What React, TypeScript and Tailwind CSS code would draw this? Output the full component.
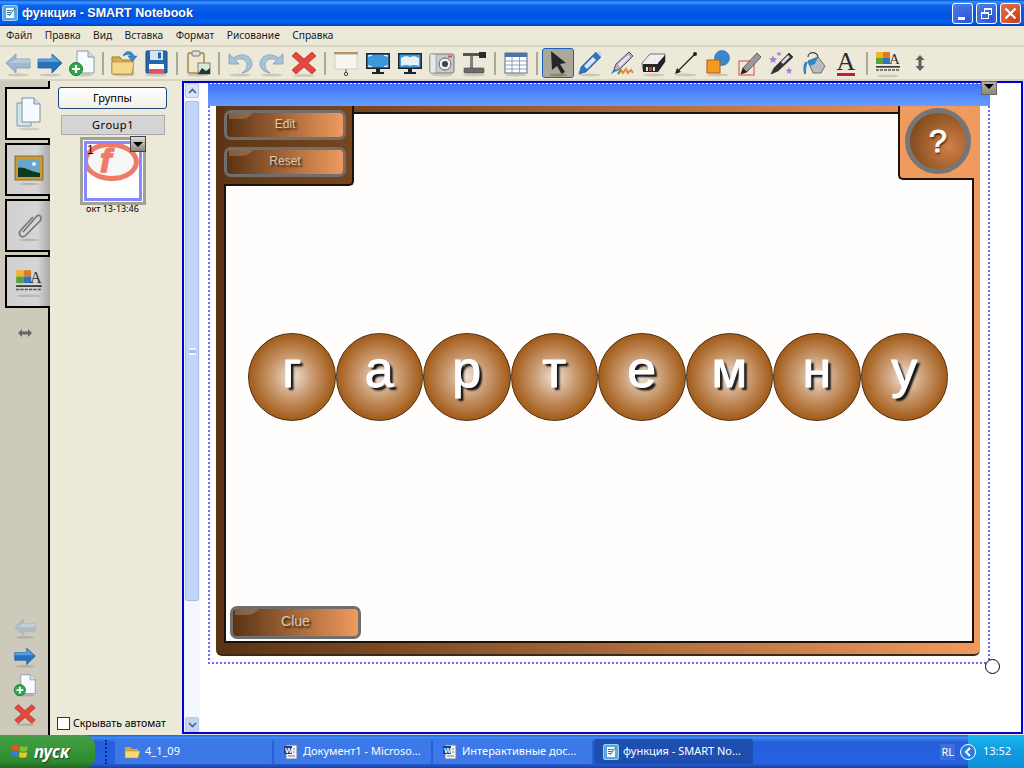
import type { ReactNode } from 'react';

const Shadow = ({ cx = 14, cy = 26, rx = 11 }: { cx?: number; cy?: number; rx?: number }) => (
  <ellipse cx={cx} cy={cy} rx={rx} ry={1.4} fill="#000" opacity={0.14} />
);

const Ico = ({ children, size = 28 }: { children: ReactNode; size?: number }) => (
  <svg width={size} height={size} viewBox="0 0 28 28">
    {children}
  </svg>
);

const ArrowL = ({ fill = '#9db9d2', stroke = '#7d9ab5', size = 28 }: { fill?: string; stroke?: string; size?: number }) => (
  <Ico size={size}>
    <Shadow />
    <path d="M2 14 L12 5 V10 H26 V19 H12 V24 Z" fill={fill} stroke={stroke} strokeWidth="0.8" />
    <path d="M12 10 H26 V14 H5 Z" fill="#fff" opacity="0.25" />
  </Ico>
);

const ArrowR = ({ size = 28 }: { size?: number }) => (
  <Ico size={size}>
    <Shadow />
    <path d="M26 14 L16 5 V10 H2 V19 H16 V24 Z" fill="#2672bd" stroke="#1c5a9c" strokeWidth="0.8" />
    <path d="M2 10 H16 V6 L24 13 H2 Z" fill="#6fb0e8" opacity="0.7" />
  </Ico>
);

const AddPage = ({ size = 28 }: { size?: number }) => (
  <Ico size={size}>
    <Shadow />
    <path d="M9 2 H20 L26 8 V24 H9 Z" fill="#f7fbff" stroke="#8a98a8" />
    <path d="M20 2 V8 H26" fill="#d4e0ec" stroke="#8a98a8" />
    <circle cx="8" cy="20" r="6.5" fill="#2ea84a" stroke="#1c7a34" />
    <path d="M8 16 V24 M4 20 H12" stroke="#fff" strokeWidth="2.2" />
  </Ico>
);

const Folder = () => (
  <Ico>
    <Shadow />
    <path d="M2 8 H10 L12 11 H23 V25 H2 Z" fill="#d7ad4e" stroke="#a07c2a" />
    <path d="M2 13 H24 L22 25 H2 Z" fill="#f4d88b" stroke="#b58f3a" strokeWidth="0.7" />
    <path d="M13 7 C15 1 22 1 24 7 L27 7 L22.5 12.5 L18 7 L21 7 C20 5 17 5 13 7 Z" fill="#3a86c8" stroke="#1f5f9e" strokeWidth="0.5" />
  </Ico>
);

const Save = () => (
  <Ico>
    <Shadow />
    <rect x="4" y="2" width="21" height="22" rx="1" fill="#2367b0" stroke="#174a84" />
    <rect x="8" y="2" width="13" height="9" fill="#d8e4f0" />
    <rect x="16" y="3.5" width="3" height="6" fill="#2367b0" />
    <rect x="7" y="15" width="15" height="9" fill="#fff" />
    <rect x="7" y="20" width="15" height="4" fill="#e25560" />
  </Ico>
);

const Clipboard = () => (
  <Ico>
    <Shadow />
    <rect x="4" y="4" width="16" height="20" rx="1" fill="#f2e6cc" stroke="#a8864e" strokeWidth="1.5" />
    <rect x="8" y="2" width="8" height="5" rx="1" fill="#ddd" stroke="#777" />
    <rect x="14" y="14" width="12" height="11" fill="#d9e6d8" stroke="#556" strokeWidth="0.7" />
    <path d="M14 25 L18 19 L22 22 L26 19 V25 Z" fill="#1f3a2a" />
  </Ico>
);

const Undo = ({ flip = false }: { flip?: boolean }) => (
  <Ico>
    <Shadow />
    <g transform={flip ? 'matrix(-1 0 0 1 28 0)' : undefined}>
      <path d="M3 5 V15 H13 L9.5 11.5 C14 8 21 10 21 16 C21 19.5 19 22 16 24 C22 23 26 19.5 26 15 C26 6 15 3 7.5 9 Z" fill="#a8c2dc" stroke="#7e9cb8" strokeWidth="0.8" />
    </g>
  </Ico>
);

const RedX = ({ size = 28 }: { size?: number }) => (
  <Ico size={size}>
    <Shadow cy={26.4} />
    <path d="M6 3 L14 10 L22 3 L26 7 L18 14 L26 21 L22 25 L14 18 L6 25 L2 21 L10 14 L2 7 Z" fill="#e4473e" stroke="#b8322c" strokeWidth="0.8" />
  </Ico>
);

const Projector = () => (
  <Ico>
    <rect x="2" y="3" width="24" height="2.4" fill="#b8985a" />
    <path d="M3 5.4 H25 V20 H3 Z" fill="#f7f6ee" stroke="#bbb" strokeWidth="0.6" />
    <path d="M14 20 V23" stroke="#555" />
    <circle cx="14" cy="25" r="1.6" fill="#fff" stroke="#333" />
  </Ico>
);

const Monitor = ({ book = false }: { book?: boolean }) => (
  <Ico>
    <rect x="2" y="4" width="24" height="16" fill="#1b2530" />
    <rect x="3.5" y="5.5" width="21" height="13" fill="#3d97d9" />
    {book ? (
      <path d="M5 9 C9 6.5 12 7 14 8.5 C16 7 19 6.5 23 9 V17 C19 15.5 16 15.5 14 17 C12 15.5 9 15.5 5 17 Z" fill="#e8f0f6" />
    ) : (
      <path d="M5 8 V6.5 H8 M20 6.5 H23 V8 M5 16 V17.5 H8 M20 17.5 H23 V16" stroke="#eaf6ff" fill="none" strokeWidth="1.2" />
    )}
    <rect x="12" y="20" width="4" height="3" fill="#222" />
    <rect x="8" y="23" width="12" height="2" fill="#222" />
  </Ico>
);

const Camera = () => (
  <Ico>
    <Shadow />
    <rect x="2" y="5" width="24" height="19" rx="2" fill="#c9c9c9" stroke="#777" />
    <rect x="2" y="5" width="6" height="19" fill="#e8e8e8" stroke="#888" strokeWidth="0.6" />
    <circle cx="17" cy="15" r="6" fill="#eee" stroke="#666" />
    <circle cx="17" cy="15" r="3" fill="#39424c" />
    <rect x="20" y="6.5" width="4" height="2" fill="#e05050" />
  </Ico>
);

const DocCam = () => (
  <Ico>
    <Shadow />
    <rect x="3" y="4" width="18" height="3" fill="#555" />
    <rect x="19" y="3" width="7" height="6" fill="#2b2b2b" />
    <rect x="10" y="7" width="3" height="13" fill="#808080" />
    <rect x="4" y="19" width="20" height="5" rx="1" fill="#6b6b6b" stroke="#3f3f3f" strokeWidth="0.6" />
  </Ico>
);

const TableIco = () => (
  <Ico>
    <Shadow />
    <rect x="3" y="4" width="22" height="20" fill="#fff" stroke="#536a88" />
    <rect x="3" y="4" width="22" height="4" fill="#4a76a8" />
    <path d="M3 12 H25 M3 16 H25 M3 20 H25 M10 8 V24 M17.5 8 V24" stroke="#7a8ea8" strokeWidth="0.8" />
  </Ico>
);

const Cursor = () => (
  <Ico>
    <ellipse cx="14" cy="26" rx="9" ry="1.4" fill="#000" opacity={0.2} />
    <path d="M7 2 L22 14 L16 15 L21 23 L17.5 25 L13 17 L8 21 Z" fill="#25262b" />
  </Ico>
);

const Pen = () => (
  <Ico>
    <Shadow />
    <path d="M3 25 L5 18 L20 3 L25 8 L10 23 Z" fill="#2f74bd" stroke="#1d528d" strokeWidth="0.6" />
    <path d="M8 17 L17 8 L20 11 L11 20 Z" fill="#d6e7f7" />
    <path d="M20 3 L25 8 L26 5 L23 2 Z" fill="#c8d8ea" />
  </Ico>
);

const Highlighter = () => (
  <Ico>
    <path d="M6 20 L8 15 L21 3 L25 7 L12 20 L8 22 Z" fill="#b9a7d0" stroke="#333" strokeWidth="0.8" />
    <path d="M10 15 L20 6 L22 8 L12 18 Z" fill="#e2e6e8" />
    <path d="M3 25 L6 20 L8 22 Z" fill="#1b6fbf" />
    <path d="M10 25 L13 21 L15 24 L18 20 L20 24 L23 21 L25 24" fill="none" stroke="#e8893a" strokeWidth="2" />
    <path d="M10 25 L13 21" stroke="#46a04c" strokeWidth="2" />
  </Ico>
);

const Eraser = () => (
  <Ico>
    <Shadow />
    <path d="M2 14 L10 5 H25 V12 L18 21 H3 Z" fill="#ededed" stroke="#555" strokeWidth="0.8" />
    <path d="M18 14 L25 6 V13 L18 23 Z" fill="#222" />
    <rect x="3" y="15" width="15" height="8" fill="#262626" />
    <rect x="6" y="18" width="2" height="4" fill="#ddd" />
    <rect x="9" y="18" width="3" height="4" fill="#c33" />
    <rect x="13" y="18" width="2" height="4" fill="#ddd" />
  </Ico>
);

const LineIco = () => (
  <Ico>
    <Shadow />
    <path d="M5 23 L23 5" stroke="#222" strokeWidth="1.3" />
    <path d="M3 25 L9 23 L5 19 Z" fill="#222" />
    <circle cx="23" cy="5" r="2" fill="#222" />
  </Ico>
);

const Shapes = () => (
  <Ico>
    <Shadow />
    <circle cx="18" cy="9" r="7.5" fill="#3a86d0" stroke="#2a68a8" strokeWidth="0.6" />
    <rect x="3" y="11" width="13" height="13" fill="#f39a24" stroke="#b05d10" />
  </Ico>
);

const PenBox = () => (
  <Ico>
    <rect x="3" y="12" width="15" height="14" fill="none" stroke="#d34b4b" strokeWidth="1" />
    <path d="M5 25 L7 19 L21 4 L25 8 L11 23 Z" fill="#9a9a9a" stroke="#333" strokeWidth="0.7" />
    <path d="M5 25 L7 19 L11 23 Z" fill="#222" />
  </Ico>
);

const MagicPen = () => (
  <Ico>
    <path d="M3 25 L6 19 L21 4 L25 8 L10 22 Z" fill="#333" stroke="#222" strokeWidth="0.6" />
    <path d="M13 13 L20 6 L22 8 L15 15 Z" fill="#ddd" />
    <path d="M5 6 L6.2 9 L9 9.4 L7 11.3 L7.6 14 L5 12.6 L2.6 14 L3 11.3 L1 9.4 L4 9 Z" fill="#a77fdb" />
    <path d="M11 2 L11.7 4 L13.6 4.2 L12.2 5.4 L12.7 7 L11 6.1 L9.4 7 L9.8 5.4 L8.4 4.2 L10.3 4 Z" fill="#a77fdb" />
    <path d="M21 18 L22 20.6 L24.6 20.8 L22.6 22.4 L23.3 25 L21 23.6 L18.8 25 L19.4 22.4 L17.5 20.8 L20 20.6 Z" fill="#a77fdb" />
  </Ico>
);

const Fill = () => (
  <Ico>
    <path d="M8 8 C8 2 18 2 18 9" fill="none" stroke="#444" strokeWidth="1.2" />
    <path d="M8 12 L18 8 L25 17 L21 24 H13 Z" fill="#b8bcc0" stroke="#555" strokeWidth="0.8" />
    <path d="M8 12 L18 8 L15 15 L9 17 Z" fill="#2c86cc" />
    <path d="M5 13 C3 16 3 21 4 25 L6 25 C6 21 6 16 8 13 Z" fill="#2c86cc" />
  </Ico>
);

const LetterA = () => (
  <span className="flex flex-col items-center leading-none">
    <span className="font-['Liberation_Serif',serif] text-[26px] leading-[21px] text-[#2a2a2a]">A</span>
    <span className="mt-[1px] h-[3px] w-[18px] bg-[#c4202c]" />
  </span>
);

const Props = ({ size = 28 }: { size?: number }) => (
  <Ico size={size}>
    <Shadow cy={27} />
    <rect x="2" y="3" width="7" height="6" fill="#eeb62a" />
    <rect x="9" y="3" width="7" height="6" fill="#e0782a" />
    <rect x="2" y="9" width="7" height="6" fill="#5aa03c" />
    <rect x="9" y="9" width="7" height="6" fill="#2f74c4" />
    <text x="15" y="15" fontFamily="Liberation Serif, serif" fontSize="15" fill="#333">A</text>
    <rect x="2" y="17" width="24" height="1.6" fill="#333" />
    <path d="M2 21 H26" stroke="#555" strokeWidth="1.5" strokeDasharray="3 1" />
  </Ico>
);

const Sep = () => (
  <div className="flex h-full w-[10px] items-center justify-center">
    <div className="h-[23px] w-[2px] bg-[#aca899]" />
  </div>
);

const Slot = ({ children, active = false }: { children: ReactNode; active?: boolean }) => (
  <div className={active
    ? 'flex h-[30px] w-8 items-center justify-center rounded-[3px] border border-[#1a5fc0] bg-[#aca899]'
    : 'flex h-[30px] w-8 items-center justify-center'}>
    {children}
  </div>
);

const menu = ['Файл', 'Правка', 'Вид', 'Вставка', 'Формат', 'Рисование', 'Справка'];
const letters = ['г', 'а', 'р', 'т', 'е', 'м', 'н', 'у'];

const GameButton = ({ label, className }: { label: string; className: string }) => (
  <div className={`relative flex items-center justify-center overflow-hidden rounded-[7px] border-[3px] border-[#6f6f6f] bg-[linear-gradient(90deg,#5a3313,#f09a5e)] ${className}`}>
    <div className="absolute left-[2px] top-[-8px] h-[14px] w-[26px] rounded-br-[20px] bg-[#c9a890] opacity-35" />
    <span className="relative -mt-[2px] font-['Liberation_Sans',sans-serif] text-[#d9c9b8] [text-shadow:2px_2px_2px_#3a2008]">{label}</span>
  </div>
);

const TabBtn = ({ children, active = false }: { children: ReactNode; active?: boolean }) => (
  <div className={active
    ? 'flex h-[53px] w-[45px] items-center justify-center border-y-2 border-l-2 border-black bg-[#ece9d8]'
    : 'flex h-[53px] w-[45px] items-center justify-center border-y-2 border-l-2 border-black bg-[linear-gradient(90deg,#d0d0d0,#d6d6d6_70%,#a8a8a8)]'}>
    {children}
  </div>
);

const TaskBtn = ({ icon, label, active = false, width }: { icon: ReactNode; label: string; active?: boolean; width: string }) => (
  <div className={`flex h-[25px] items-center gap-[4px] rounded-[2px] pl-[9px] text-[11px] text-white ${width} ${active ? 'bg-[#1e4fae]' : 'bg-[#3c78e8]'}`}>
    {icon}
    <span className="whitespace-nowrap">{label}</span>
  </div>
);

const WordIco = () => (
  <svg width="16" height="16" viewBox="0 0 16 16">
    <path d="M3 1 H14 V15 H3 Z" fill="#f4f7fb" stroke="#6a7b98" />
    <rect x="1" y="2" width="8" height="8" fill="#1c3f94" />
    <text x="2" y="9" fontSize="8" fontWeight="700" fill="#fff" fontFamily="Liberation Sans, sans-serif">W</text>
    <path d="M5 12 H12 M10 5 H12 M10 8 H12" stroke="#6a7b98" />
  </svg>
);

const NotebookIco = ({ size = 16 }: { size?: number }) => (
  <svg width={size} height={size} viewBox="0 0 16 16">
    <rect x="0.5" y="0.5" width="15" height="15" rx="1.5" fill="#58a8dc" stroke="#9fd0ee" />
    <rect x="4" y="3" width="8" height="10" fill="#f4fafe" />
    <path d="M5 5.5 H10 M5 7.5 H9 M5 9.5 H8 M7 11 L13 3" stroke="#2b6fa6" strokeWidth="0.9" />
  </svg>
);

export default function App() {
  return (
    <div className="flex h-[768px] w-[1024px] flex-col overflow-hidden bg-[#ece9d8] font-['Noto_Sans',sans-serif] text-black">
      {/* title bar */}
      <div className="flex h-[26px] shrink-0 items-center bg-[linear-gradient(180deg,#0a58d8_0%,#3a93ff_9%,#0a62ea_22%,#0055e5_60%,#0060ee_86%,#0040b8_100%)] pl-[2px] pr-[3px]">
        <NotebookIco size={16} />
        <span className="ml-[4px] whitespace-nowrap font-['Liberation_Sans',sans-serif] text-[12.5px] font-bold leading-none text-white [text-shadow:1px_1px_0_#0a3aa0]">функция - SMART Notebook</span>
        <div className="ml-auto flex gap-[3px]">
          <div className="flex h-[21px] w-[21px] items-end rounded-[3px] border border-white bg-[radial-gradient(circle_at_70%_80%,#2a56d8,#4f7fe8)] pb-[3px] pl-[5px]">
            <div className="h-[3px] w-[7px] bg-white" />
          </div>
          <div className="relative flex h-[21px] w-[21px] items-center justify-center rounded-[3px] border border-white bg-[radial-gradient(circle_at_70%_80%,#2a56d8,#4f7fe8)]">
            <div className="absolute left-[7px] top-[4px] h-[7px] w-[8px] border border-t-2 border-white" />
            <div className="absolute left-[4px] top-[8px] h-[7px] w-[8px] border border-t-2 border-white bg-[#3a68de]" />
          </div>
          <div className="flex h-[21px] w-[21px] items-center justify-center rounded-[3px] border border-white bg-[radial-gradient(circle_at_80%_80%,#c8401a,#e8704a)]">
            <svg width="13" height="13" viewBox="0 0 13 13"><path d="M1.5 1.5 L11.5 11.5 M11.5 1.5 L1.5 11.5" stroke="#fff" strokeWidth="2.2" /></svg>
          </div>
        </div>
      </div>

      {/* menu */}
      <div className="flex h-[19px] shrink-0 items-center gap-[12.4px] pl-[6px] text-[10.2px] leading-none text-[#1a1a1a]">
        {menu.map((m) => <span key={m}>{m}</span>)}
      </div>

      {/* toolbar */}
      <div className="flex h-[36px] shrink-0 items-center border-y-2 border-[#d6d3c2] pl-[2px]">
        <Slot><ArrowL /></Slot>
        <Slot><ArrowR /></Slot>
        <Slot><AddPage /></Slot>
        <Sep />
        <Slot><Folder /></Slot>
        <Slot><Save /></Slot>
        <Sep />
        <Slot><Clipboard /></Slot>
        <Sep />
        <Slot><Undo /></Slot>
        <Slot><Undo flip /></Slot>
        <Slot><RedX /></Slot>
        <Sep />
        <Slot><Projector /></Slot>
        <Slot><Monitor /></Slot>
        <Slot><Monitor book /></Slot>
        <Slot><Camera /></Slot>
        <Slot><DocCam /></Slot>
        <Sep />
        <Slot><TableIco /></Slot>
        <Sep />
        <Slot active><Cursor /></Slot>
        <Slot><Pen /></Slot>
        <Slot><Highlighter /></Slot>
        <Slot><Eraser /></Slot>
        <Slot><LineIco /></Slot>
        <Slot><Shapes /></Slot>
        <Slot><PenBox /></Slot>
        <Slot><MagicPen /></Slot>
        <Slot><Fill /></Slot>
        <Slot><LetterA /></Slot>
        <Sep />
        <Slot><Props /></Slot>
        <Slot>
          <svg width="12" height="18" viewBox="0 0 12 18"><path d="M6 1 L10.5 6 H7.5 V12 H10.5 L6 17 L1.5 12 H4.5 V6 H1.5 Z" fill="#5f5f5f" /></svg>
        </Slot>
      </div>

      {/* main */}
      <div className="flex min-h-0 flex-1">
        {/* side tabs */}
        <div className="flex w-[50px] shrink-0 flex-col border-r-2 border-black bg-[#cdcabb] pl-[5px] pt-[6px]">
          <div className="flex flex-col gap-[3px]">
            <TabBtn active>
              <svg width="28" height="36" viewBox="0 0 28 36">
                <ellipse cx="14" cy="33" rx="11" ry="1.5" fill="#000" opacity="0.12" />
                <path d="M2 7 H16 V30 H2 Z" fill="#cfe6ee" stroke="#7e9aa6" />
                <path d="M7 2 H19 L25 8 V26 H7 Z" fill="#f6fbff" stroke="#7e8e9e" />
                <path d="M19 2 V8 H25" fill="#d4dee8" stroke="#7e8e9e" />
              </svg>
            </TabBtn>
            <TabBtn>
              <svg width="30" height="34" viewBox="0 0 30 34">
                <rect x="1" y="3" width="28" height="24" fill="#c89a38" stroke="#8a6a20" />
                <rect x="4" y="6" width="22" height="18" fill="#6aa6c8" />
                <path d="M4 24 V15 C10 13 14 18 26 20 V24 Z" fill="#0c3a1c" />
                <circle cx="20" cy="11" r="2" fill="#e8f6ff" />
                <ellipse cx="15" cy="31" rx="10" ry="1.2" fill="#000" opacity="0.15" />
              </svg>
            </TabBtn>
            <TabBtn>
              <svg width="30" height="34" viewBox="0 0 30 34">
                <path d="M9 23 L22 8 C25 4 29 8 26 12 L12 26 C8 30 3 26 7 21 L19 8" fill="none" stroke="#777" strokeWidth="1.7" />
                <ellipse cx="15" cy="31" rx="10" ry="1.2" fill="#000" opacity="0.15" />
              </svg>
            </TabBtn>
            <TabBtn><Props size={30} /></TabBtn>
          </div>
          <div className="mt-[20px] flex w-[40px] justify-center">
            <svg width="16" height="10" viewBox="0 0 16 10"><path d="M1 5 L5 1 V3.5 H11 V1 L15 5 L11 9 V6.5 H5 V9 Z" fill="#666" /></svg>
          </div>
          <div className="mt-auto flex w-[40px] flex-col items-center gap-[5px] pb-[9px]">
            <ArrowL size={24} fill="#aebec4" stroke="#a0b0b8" />
            <ArrowR size={24} />
            <AddPage size={24} />
            <RedX size={24} />
          </div>
        </div>

        {/* page sorter */}
        <div className="flex w-[132px] shrink-0 flex-col pl-[8px] pt-[6px]">
          <div className="flex h-[22px] w-[109px] items-center justify-center rounded-[3px] border border-[#1c4a80] bg-[linear-gradient(180deg,#fff,#f0efe6)] text-[11px]">Группы</div>
          <div className="ml-[3px] mt-[6px] flex h-[20px] w-[104px] items-center justify-center border border-[#aaa] bg-[#d4d4d4] text-[11px] tracking-[0.5px]">Group1</div>
          <div className="relative ml-[22px] mt-[2px] h-[68px] w-[66px] border-[3px] border-[#a3a194] bg-white p-[1px]">
            <div className="relative h-full w-full overflow-hidden border-[3px] border-[#8888ff] bg-white">
              <div className="absolute left-[-4px] top-[-2px] h-[39px] w-[56px] rotate-[2deg] rounded-[50%] border-[5px] border-[#f07a68] bg-[#f6f6f6]" />
              <span className="absolute left-[13px] top-[-2px] font-['Liberation_Sans',sans-serif] text-[34px] font-bold italic leading-[36px] text-[#f07a68] [-webkit-text-stroke:1.5px_#f07a68]">f</span>
              <span className="absolute left-0 top-[-1px] font-['Liberation_Sans',sans-serif] text-[12px] leading-[14px]">1</span>
            </div>
            <div className="absolute right-[-3px] top-[-4px] flex h-[16px] w-[16px] items-center justify-center border border-[#444] bg-[linear-gradient(180deg,#ddd,#8a8878)]">
              <div className="h-0 w-0 border-x-[5px] border-t-[5px] border-x-transparent border-t-black" />
            </div>
          </div>
          <div className="-mt-[2px] w-[109px] text-center text-[9px] leading-[11px]">окт 13-13:46</div>
          <div className="-ml-[1px] mt-auto flex items-center gap-[3px] pb-[5px] text-[10.5px] leading-none">
            <div className="h-[13px] w-[13px] border border-[#1c3a5c] bg-white" />
            <span className="whitespace-nowrap">Скрывать автомат</span>
          </div>
        </div>

        {/* canvas frame */}
        <div className="mb-[1px] mr-[1px] flex min-w-0 flex-1 border-2 border-[#0000d8]">
          <div className="flex w-[16px] shrink-0 flex-col bg-[#f4f7fd] px-[1px]">
            <div className="flex h-[15px] items-center justify-center rounded-[2px] border border-[#b8c8e8] bg-[#d4e2fa]">
              <svg width="9" height="6" viewBox="0 0 9 6"><path d="M1 5 L4.5 1.5 L8 5" fill="none" stroke="#4d6185" strokeWidth="1.6" /></svg>
            </div>
            <div className="mt-[3px] flex h-[500px] flex-col items-center justify-center rounded-[2px] border border-[#a8bce0] bg-[#c1d5f8]">
              <div className="h-[7px] w-[7px] border-y-2 border-[#eef4ff] bg-[#a8c0e8]" />
            </div>
            <div className="mt-auto flex h-[15px] items-center justify-center rounded-[2px] border border-[#b8c8e8] bg-[#c4d4f4]">
              <svg width="9" height="6" viewBox="0 0 9 6"><path d="M1 1 L4.5 4.5 L8 1" fill="none" stroke="#4d6185" strokeWidth="1.6" /></svg>
            </div>
          </div>

          <div className="relative flex-1 bg-white pl-[8px]">
            {/* selected object */}
            <div className="relative flex h-[581px] w-[782px] flex-col border-2 border-dotted border-[#6a6aff] pl-[6px]">
              <div className="relative z-10 -ml-[8px] -mr-[2px] -mt-[1px] h-[22px] shrink-0 bg-[linear-gradient(180deg,#3d72f5,#5b92ff_70%,#6a9cff)]" />
              <div className="flex h-[550px] w-[764px] flex-col rounded-b-[6px] border-b-2 border-[#3a2a1a] bg-[linear-gradient(90deg,#5a3313,#f09a5e)] pb-[11px] pl-[8px] pr-[6px] pt-[6px]">
                <div className="flex min-h-0 flex-1 flex-col border-2 border-[#1a1208] bg-[#fffefc]">
                  <div className="flex h-[72px] shrink-0 justify-between">
                    <div className="-ml-[2px] -mt-[9px] flex w-[130px] flex-col gap-[7px] rounded-br-[5px] border-b-2 border-r-2 border-[#1a1208] bg-[linear-gradient(90deg,#5e3715,#77461f)] pr-[6px] pt-[5px]">
                      <GameButton label="Edit" className="h-[30px] w-[122px] text-[12px]" />
                      <GameButton label="Reset" className="h-[30px] w-[122px] text-[12px]" />
                    </div>
                    <div className="-mr-[2px] -mt-[9px] flex h-[75px] w-[76px] items-start justify-start rounded-bl-[5px] border-b-2 border-l-2 border-[#1a1208] bg-[#f09a5e] pl-[5px] pt-[3px]">
                      <div className="flex h-[66px] w-[66px] shrink-0 items-center justify-center rounded-full border-[5px] border-[#767676] bg-[radial-gradient(circle_at_70%_60%,#d08048,#8a5020_70%,#6a3c18)] font-['Liberation_Sans',sans-serif] text-[32px] text-white [-webkit-text-stroke:1px_#fff] [text-shadow:1px_2px_2px_#3a2008]">?</div>
                    </div>
                  </div>
                  <div className="flex flex-1 items-center justify-center pb-[39px] pr-[2px]">
                    {letters.map((l, i) => (
                      <div key={i} className="flex h-[88px] w-[87.5px] shrink-0 items-center justify-center rounded-full border border-[#4a2c10] bg-[radial-gradient(circle,#efe2d6_0%,#c8986e_35%,#a5601f_68%,#985414_100%)] pb-[16px] font-['Liberation_Sans',sans-serif] text-[52px] leading-none text-white [-webkit-text-stroke:1px_#fff] [text-shadow:3px_3px_2px_#111]">
                        {l}
                      </div>
                    ))}
                  </div>
                  <div className="pb-[2px] pl-[4px]">
                    <GameButton label="Clue" className="h-[33px] w-[131px] text-[14px]" />
                  </div>
                </div>
              </div>
              <div className="absolute right-[-9px] top-[-4px] z-20 flex h-[14px] w-[16px] items-start justify-center border border-[#666] bg-[linear-gradient(180deg,#b5b3a5,#8a8878)] pt-[2px]">
                <div className="h-0 w-0 border-x-[5px] border-t-[5px] border-x-transparent border-t-black" />
              </div>
              <div className="absolute bottom-[-12px] right-[-12px] h-[15px] w-[15px] rounded-full border border-black bg-white" />
            </div>
          </div>
        </div>
      </div>

      {/* taskbar */}
      <div className="flex h-[33px] shrink-0 items-center bg-[linear-gradient(180deg,#1f5fd8_0%,#3f8cf3_8%,#245edb_22%,#2663e0_85%,#1941a5_100%)] text-white">
        <div className="flex h-full w-[95px] items-center gap-[4px] rounded-r-[10px] bg-[linear-gradient(180deg,#4a9a4a_0%,#3f9c3f_20%,#2f8a2f_80%,#1f6a1f_100%)] pl-[10px]">
          <svg width="20" height="20" viewBox="0 0 20 20">
            <path d="M2 4 C4 3 6 3 9 4 L8.5 9 C6 8 4 8 1.5 9 Z" fill="#e8522a" />
            <path d="M10 4 C13 5 15 5 18 4 L17 9 C15 10 12 10 9.5 9 Z" fill="#7cc23c" />
            <path d="M1.5 10 C4 9 6 9 8.5 10 L8 15 C6 14 3 14 1 15 Z" fill="#3a7cde" />
            <path d="M9.5 10 C12 11 15 11 17 10 L16.5 15 C14 16 11 16 9 15 Z" fill="#f4c520" />
          </svg>
          <span className="text-[17px] font-bold italic leading-none [text-shadow:1px_1px_1px_#1a4a1a]">пуск</span>
        </div>
        <div className="ml-[10px] h-[24px] w-[3px] border-l-2 border-dotted border-[#0a2a88]" />
        <div className="ml-[7px] flex gap-[2px]">
          <TaskBtn
            width="w-[157px]"
            label="4_1_09"
            icon={
              <svg width="17" height="16" viewBox="0 0 17 16">
                <path d="M1 3 H6 L8 5 H14 V14 H1 Z" fill="#d9a830" />
                <path d="M1 7 H16 L14 14 H1 Z" fill="#f6d878" stroke="#b88a20" strokeWidth="0.5" />
              </svg>
            }
          />
          <TaskBtn width="w-[157px]" label="Документ1 - Microso..." icon={<WordIco />} />
          <TaskBtn width="w-[159px]" label="Интерактивные дос..." icon={<WordIco />} />
          <TaskBtn width="w-[159px]" active label="функция - SMART No..." icon={<NotebookIco />} />
        </div>
        <div className="ml-auto flex h-full items-center">
          <span className="mr-[13px] bg-[#3c6fd8] px-[1px] text-[11px] leading-[16px]">RL</span>
          <div className="flex h-full w-[56px] items-center bg-[linear-gradient(180deg,#18b8ee,#0f9ae0_50%,#1290d8)]">
            <div className="-ml-[8px] flex h-[16px] w-[16px] shrink-0 items-center justify-center rounded-full border border-white bg-[#2a7ce0]">
              <svg width="8" height="10" viewBox="0 0 8 10"><path d="M6 1 L2 5 L6 9" fill="none" stroke="#fff" strokeWidth="2" /></svg>
            </div>
            <span className="ml-[7px] text-[11px]">13:52</span>
          </div>
        </div>
      </div>
    </div>
  );
}
